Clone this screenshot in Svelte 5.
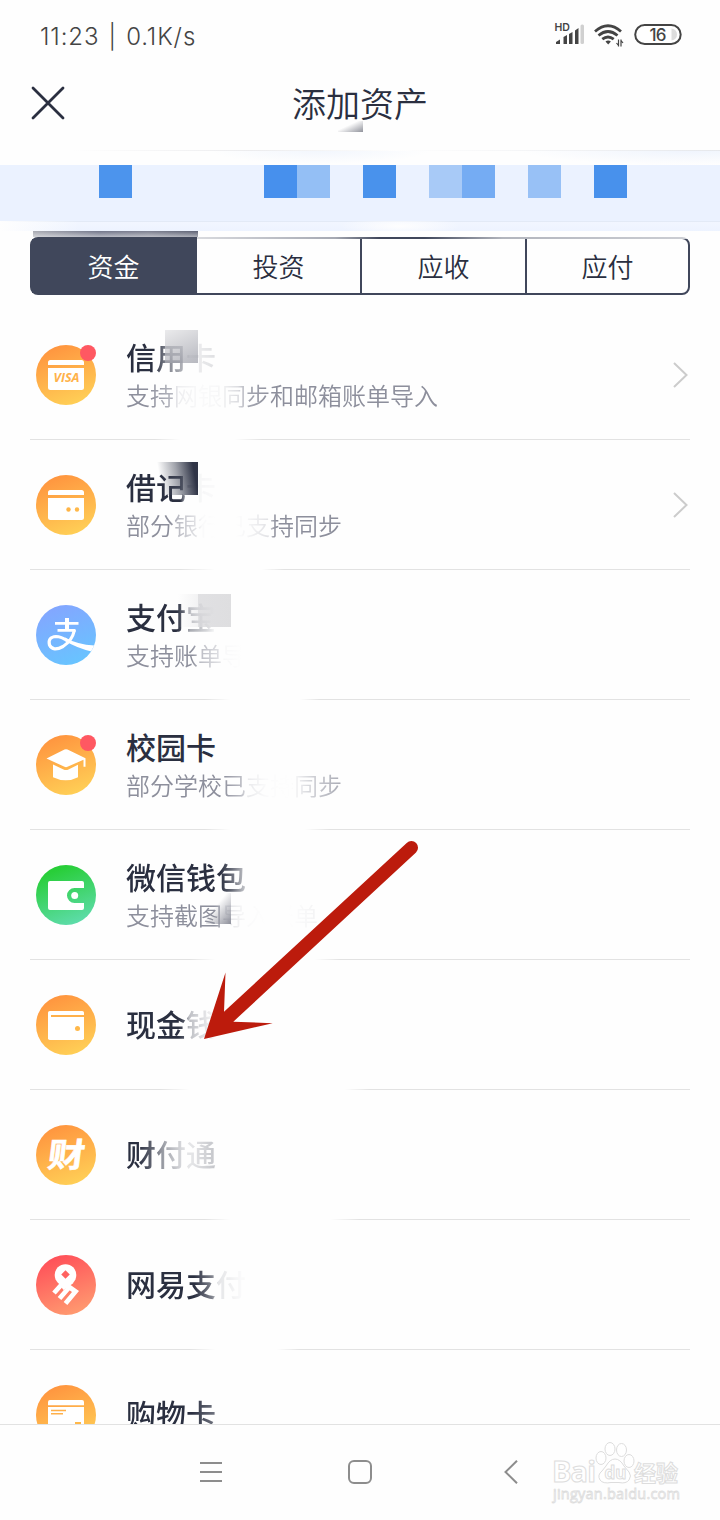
<script lang="ts">
	interface Asset {
		icon: string;
		tone: string;
		title: string;
		sub?: string;
		dot?: boolean;
		arrow?: boolean;
		// alpha/offset pairs for the wiped part of each line
		titleFade?: [number, number][];
		subFade?: [number, number][];
		gap?: [number, number, number, number];
	}

	const tabs = ['资金', '投资', '应收', '应付'];
	let active = $state(0);

	const assets: Asset[] = [
		{
			icon: 'visa',
			tone: 'orange',
			title: '信用卡',
			sub: '支持网银同步和邮箱账单导入',
			dot: true,
			arrow: true,
			titleFade: [[1, 28], [0.6, 40], [0.35, 58], [0.06, 64], [0.15, 90]],
			subFade: [[1, 22], [0.65, 46], [0.15, 52], [0.04, 74], [0.06, 92], [0.3, 112], [0.8, 122], [1, 145]],
			gap: [125, 150, 205, 232]
		},
		{
			icon: 'debit',
			tone: 'orange',
			title: '借记卡',
			sub: '部分银行已支持同步',
			arrow: true,
			titleFade: [[1, 54], [0.4, 60], [0.04, 68], [0.02, 90]],
			subFade: [[1, 44], [0.6, 52], [0.25, 70], [0.04, 76], [0, 90], [0, 110], [0.08, 122], [0.25, 142], [0.9, 148], [1, 150]],
			gap: [150, 185, 232, 254]
		},
		{
			icon: 'alipay',
			tone: 'blue',
			title: '支付宝',
			sub: '支持账单导入',
			titleFade: [[1, 50], [0.8, 58], [0.4, 64], [0.2, 80], [0.05, 88]],
			subFade: [[1, 66], [0.6, 74], [0.25, 94], [0.05, 98], [0, 116]],
			gap: [175, 200, 270, 290]
		},
		{
			icon: 'campus',
			tone: 'orange',
			title: '校园卡',
			sub: '部分学校已支持同步',
			dot: true,
			subFade: [[1, 96], [0.6, 115], [0.18, 122], [0.03, 140], [0, 165], [0.25, 178], [0.5, 192], [0.75, 216]],
			gap: [175, 200, 275, 300]
		},
		{
			icon: 'wechat',
			tone: 'green',
			title: '微信钱包',
			sub: '支持截图导入账单',
			titleFade: [[1, 94], [0.7, 106], [0.3, 118]],
			subFade: [[1, 88], [0.7, 95], [0.25, 100], [0.04, 120], [0, 140], [0, 162], [0.1, 192]],
			gap: [160, 185, 285, 310]
		},
		{
			icon: 'cash',
			tone: 'orange',
			title: '现金钱包',
			titleFade: [[1, 52], [0.8, 59], [0.3, 63], [0.12, 80], [0, 90]],
			gap: [130, 160, 315, 340]
		},
		{
			icon: 'tenpay',
			tone: 'orange',
			title: '财付通',
			titleFade: [[1, 12], [0.7, 28], [0.4, 40], [0.12, 60], [0.12, 66], [0.28, 90]],
			gap: [175, 200, 300, 330]
		},
		{
			icon: 'netease',
			tone: 'red',
			title: '网易支付',
			titleFade: [[1, 68], [0.6, 86], [0.12, 92], [0.02, 115]],
			gap: [160, 185, 247, 270]
		},
		{
			icon: 'shopping',
			tone: 'orange',
			title: '购物卡',
			titleFade: [[1, 66], [0.65, 90]]
		}
	];

	const mosaic = [
		'', '', '', '#4c94ed', '', '', '', '', '#4790ed', '#94bff5', '', '#4992ec',
		'', '#a8caf7', '#75acf3', '', '#98c1f6', '', '#4891ec', '', '', ''
	];

	function fade(stops?: [number, number][]) {
		if (!stops) return 'none';
		return `linear-gradient(90deg, ${stops.map(([a, x]) => `rgba(0,0,0,${a}) ${x}px`).join(', ')})`;
	}

	function gapFade(gap?: [number, number, number, number]) {
		if (!gap) return 'none';
		return fade([[1, gap[0]], [0, gap[1]], [0, gap[2]], [1, gap[3]]]);
	}
</script>

<div class="screen">
	<div class="status">
		<span class="clock">11:23 | 0.1K/s</span>
		<svg class="status-icons" width="130" height="28" viewBox="0 0 130 28">
			<text x="1.5" y="11" class="hd">HD</text>
			<g fill="#444">
				<path d="M3 24v-2l4-2.500v4.500zM10.500 24v-7l3.500-2v9zM16 24v-10l3.500-2v12zM22 24V10.500L25.500 8v16z" />
			</g>
			<rect x="27.500" y="4.500" width="3.500" height="19.500" rx="1.500" fill="#d0d0d0" />
			<g fill="none" stroke="#444" stroke-width="2.800">
				<path d="M42 11.500q13-11.500 26 0" />
				<path d="M45.500 15.500q9.500-8 19 0" />
				<path d="M49.300 19.200q5.700-4.500 11.400 0" />
			</g>
			<path d="M55.200 24.500l-2.700-3q2.700-2 5.400 0z" fill="#444" />
			<path d="M65.500 19.500v7M68 26.500v-7M63.500 23l2 2.500M70 23l-2-2.500" stroke="#444" stroke-width="1.200" fill="none" />
			<rect x="82.200" y="5" width="45.500" height="19" rx="9.500" fill="#fff" stroke="#444" stroke-width="2" />
			<path d="M118.500 8.500q5.500 1 5.500 6t-5.500 6z" fill="#ddd" />
			<text x="96.500" y="20.500" class="level">16</text>
		</svg>
	</div>

	<header>
		<svg class="close" width="36" height="36" viewBox="0 0 36 36">
			<path d="M3 3l30 30M33 3L3 33" stroke="#2a2f40" stroke-width="2.800" stroke-linecap="round" />
		</svg>
		<h1>添加资产</h1>
		<i class="title-smudge"></i>
	</header>

	<div class="banner">
		<div class="haze"></div>
		<div class="mosaic">
			{#each mosaic as color}
				<i style:background={color}></i>
			{/each}
		</div>
	</div>

	<div class="tabs" role="tablist">
		{#each tabs as tab, i}
			<button class="tab" class:active={active === i} role="tab" aria-selected={active === i} onclick={() => (active = i)}>
				{tab}
			</button>
		{/each}
		<i class="tabs-smudge"></i>
	</div>

	<main>
		{#each assets as asset}
			<div class="row">
				<div class="icon {asset.tone}">
					<svg width="60" height="60" viewBox="0 0 60 60">
						{#if asset.icon === 'visa'}
							<path d="M12 20v-2.500q0-2.500 2.500-2.500h31q2.500 0 2.500 2.500V20zM12 23h36v19.500q0 2.500-2.500 2.500h-31q-2.500 0-2.500-2.500z" fill="#fff" />
							<text x="30.500" y="37" class="visa" textLength="26" lengthAdjust="spacingAndGlyphs">VISA</text>
						{:else if asset.icon === 'debit'}
							<path d="M12 20v-2.500q0-2.500 2.500-2.500h31q2.500 0 2.500 2.500V20zM12 23h36v19.500q0 2.500-2.500 2.500h-31q-2.500 0-2.500-2.500z" fill="#fff" />
							<circle cx="32.500" cy="34.500" r="2.200" fill="#ffb445" />
							<circle cx="41" cy="34.500" r="2.200" fill="#ffb84a" />
						{:else if asset.icon === 'alipay'}
							<g fill="none" stroke="#fff">
								<path d="M19 18.300h23.500M21.500 25.300h18" stroke-width="2.800" />
								<path d="M31 13v12" stroke-width="4" />
								<path d="M38.500 25Q36 36 27 41.500Q17 47 13.500 40Q11.500 32 20 31.500Q25 31.500 32 36" stroke-width="3.200" />
							</g>
							<path d="M29 32.500Q41 39.500 58.500 40.500L55.500 46.500Q41 43 29 36z" fill="#fff" />
						{:else if asset.icon === 'campus'}
							<g fill="#fff">
								<path d="M10.500 23.500L28.500 14.500q1.500-.700 3 0L49.500 23.200v8.500h-2v-7L31.500 31.800q-1.500.700-3 0z" />
								<path d="M17 29.500l10.500 5q2.500 1.200 5 0l9.500-4.800v12.500Q30 48.500 17 42.200z" />
							</g>
						{:else if asset.icon === 'wechat'}
							<path d="M14 16h32q2 0 2 2v5H38.500a7.500 7.500 0 0 0 0 15H48v5q0 2-2 2H14q-2 0-2-2V18q0-2 2-2z" fill="#fff" />
							<circle cx="38.700" cy="30.600" r="3.500" fill="#fff" />
						{:else if asset.icon === 'cash'}
							<rect x="12" y="16" width="36" height="29" rx="1.800" fill="#fff" />
							<path d="M15 21h33" stroke="#ffb04a" stroke-width="2" />
							<circle cx="41.500" cy="33.500" r="2.500" fill="#ffb84a" />
						{:else if asset.icon === 'tenpay'}
							<text x="0" y="0" class="cai" transform="translate(10.500 41.500) skewX(-7) scale(1.06 .95)">财</text>
						{:else if asset.icon === 'netease'}
							<circle cx="29.500" cy="20" r="10.800" fill="#fff" />
							<rect x="26.500" y="16.500" width="6" height="6" fill="#ff6260" transform="rotate(45 29.500 19.500)" />
							<path d="M24 25.500L39.500 36.500L29.500 48.500M27 28L18 38M33.500 32L23.500 43.500" fill="none" stroke="#fff" stroke-width="4.800" />
							<path d="M36 26L26 33" stroke="#fff" stroke-width="5" />
						{:else if asset.icon === 'shopping'}
							<path d="M12 20.300v-3.300q0-2 2-2h32q2 0 2 2v3.300zM12 22h36v21q0 2-2 2H14q-2 0-2-2z" fill="#fff" />
							<path d="M15 25.500h15M15 28.800h12" stroke="#ffb04a" stroke-width="1.400" />
							<rect x="39" y="37" width="6" height="4" fill="#ffb84a" />
						{/if}
					</svg>
					{#if asset.dot}
						<b class="dot"></b>
					{/if}
				</div>
				<div class="text" class:single={!asset.sub}>
					<div class="title" style:mask-image={fade(asset.titleFade)}>{asset.title}</div>
					{#if asset.sub}
						<div class="sub" style:mask-image={fade(asset.subFade)}>{asset.sub}</div>
					{/if}
				</div>
				{#if asset.arrow}
					<svg class="chevron" width="17" height="28" viewBox="0 0 17 28">
						<path d="M2 2l12.500 12L2 26" fill="none" stroke="#ccc" stroke-width="2" />
					</svg>
				{/if}
				<i class="smudge {asset.icon}"></i>
				<div class="line" style:mask-image={gapFade(asset.gap)}></div>
			</div>
		{/each}
	</main>

	<nav>
		<svg width="22" height="22" viewBox="0 0 22 22">
			<path d="M0 2h22M0 11h22M0 20h22" stroke="#8d8d8d" stroke-width="2" />
		</svg>
		<svg width="24" height="24" viewBox="0 0 24 24">
			<rect x="1" y="1" width="22" height="22" rx="5" fill="none" stroke="#8d8d8d" stroke-width="2" />
		</svg>
		<svg width="14" height="24" viewBox="0 0 14 24">
			<path d="M13 .700L1.500 12L13 23.300" fill="none" stroke="#8d8d8d" stroke-width="2" />
		</svg>
	</nav>

	<svg class="arrow" width="220" height="208" viewBox="0 0 220 208">
		<path d="M0 202L21.500 135.500L20 174.700L202.700 5.900A6.600 6.600 0 0 1 212 15.500L29.300 184.700L68.700 186.300z" fill="#bc1b0c" />
	</svg>

	<svg class="watermark" width="140" height="70" viewBox="0 0 140 70">
		<g fill="#fff" stroke="#ddd" stroke-width="1">
			<text x="2" y="42" class="wm-bai" textLength="44">Bai</text>
			<ellipse cx="51" cy="18" rx="5" ry="6.500" />
			<ellipse cx="60" cy="9" rx="5" ry="6.500" />
			<ellipse cx="71.500" cy="10" rx="5" ry="6.500" />
			<ellipse cx="79" cy="21" rx="5" ry="6.500" />
			<path d="M65 19q5 0 9 7l5 6q3 4 0 8q-3 4-10 2.500h-8q-8 1.500-11-2.500q-3-5 2-9l4-5q4-7 9-7z" />
			<text x="54.500" y="39" class="wm-du">du</text>
			<text x="84" y="41" class="wm-jy">经验</text>
			<text x="3" y="59" class="wm-url" textLength="127">jingyan.baidu.com</text>
		</g>
	</svg>
</div>

<style>
	:global(body) {
		background: #fefefe;
	}

	.screen {
		position: relative;
		display: flex;
		flex-direction: column;
		width: 720px;
		height: 1520px;
		overflow: hidden;
		background: #fefefe;
		color: #2a2f40;
		font-family: 'Noto Sans CJK SC', sans-serif;
	}

	i {
		display: block;
	}

	.status {
		display: flex;
		justify-content: space-between;
		align-items: center;
		height: 72px;
		padding: 0 37px 0 40px;
		box-sizing: border-box;
	}

	.clock {
		font: 24px Inter, sans-serif;
		font-weight: 350;
		letter-spacing: 0.9px;
		word-spacing: 1.5px;
		color: #444;
	}

	.status-icons {
		margin-top: -4px;
	}

	.hd {
		font: 600 10.5px Inter, sans-serif;
		fill: #444;
	}

	.level {
		font: 500 17px Inter, sans-serif;
		letter-spacing: -0.8px;
		fill: #444;
	}

	header {
		position: relative;
		display: flex;
		align-items: center;
		height: 78px;
		padding: 0 30px;
	}

	.close {
		margin-top: -16px;
	}

	h1 {
		flex: 1;
		margin: -17px 36px 0 0;
		text-align: center;
		font-size: 34px;
		font-weight: 350;
		line-height: 48px;
	}

	.title-smudge {
		position: absolute;
		left: 338px;
		top: 49px;
		width: 25px;
		height: 11px;
		background: linear-gradient(335deg, #90929b, #fefefe 60%);
	}

	.banner {
		height: 81px;
		background:
			linear-gradient(90deg, #fefefe, #fefefe00 80px) 0 71px / 100% 10px no-repeat,
			radial-gradient(ellipse 60px 10px at 400px 5px, #fefefe, #fefefe00) 0 71px / 100% 10px no-repeat,
			linear-gradient(#ebf2ff 71px, #e3eaf6 71px, #e3eaf6 72px, #f2f6ff 72px, #edf3ff);
	}

	.haze {
		height: 15px;
		background:
			linear-gradient(90deg, #fefefe 10%, #ececee 35%, #fefefe 55%, #e6e8ec) 0 0 / 100% 1px no-repeat,
			radial-gradient(ellipse 110px 14px at 320px 0, #f2f6fd, #fefefe00),
			radial-gradient(ellipse 170px 15px at 690px 0, #eff4fd, #fefefe00),
			#fefefe;
	}

	.mosaic {
		display: flex;
	}

	.mosaic i {
		flex: none;
		width: 33px;
		height: 33px;
	}

	.tabs {
		position: relative;
		display: flex;
		box-sizing: border-box;
		flex: none;
		height: 58px;
		margin: 6px 30px 15px;
		border: 2px solid #40475b;
		border-radius: 8px;
	}

	.tab {
		flex: 0 0 165px;
		box-sizing: border-box;
		padding: 0 0 2px;
		border: none;
		border-right: 2px solid #40475b;
		background: none;
		color: #2a2f40;
		font-family: inherit;
		font-size: 26px;
		font-weight: 350;
	}

	.tab:nth-of-type(4) {
		flex: 1;
		border-right: none;
	}

	.tab.active {
		background: #40475b;
		color: #fff;
	}

	.tabs-smudge {
		position: absolute;
		left: 1px;
		top: -8px;
		width: 165px;
		height: 6px;
		background:
			linear-gradient(#fff0, #ffffff80),
			linear-gradient(90deg, #a9abb3, #72768a 40%, #7d8090 70%, #5d6274);
	}

	.tabs::after {
		content: '';
		position: absolute;
		left: 165px;
		right: -2px;
		top: -2px;
		height: 2px;
		border-radius: 0 8px 0 0;
		background: linear-gradient(90deg, #fffc, #fff8 28%, #fff0 37%, #fff0 46%, #fff9 62%, #fffb);
	}

	main {
		flex: 1;
		min-height: 0;
		overflow: hidden;
		padding: 0 30px;
	}

	.row {
		position: relative;
		display: flex;
		align-items: center;
		height: 130px;
	}

	.icon {
		position: relative;
		width: 60px;
		height: 60px;
		margin: 0 30px 0 6px;
		border-radius: 50%;
	}

	.icon svg {
		display: block;
		border-radius: 50%;
	}

	.orange {
		background: linear-gradient(160deg, #ff953f 10%, #ffcf56 90%);
	}

	.blue {
		background: linear-gradient(160deg, #83a6ff 10%, #68c4ff 90%);
	}

	.green {
		background: linear-gradient(160deg, #28ce38 15%, #5edcab 90%);
	}

	.red {
		background: linear-gradient(160deg, #ff5059 10%, #ff9a70 90%);
	}

	.dot {
		position: absolute;
		right: 0;
		top: 0;
		width: 16px;
		height: 16px;
		border-radius: 50%;
		background: #ff5862;
	}

	text.visa {
		font: italic 700 11.5px 'Open Sans', sans-serif;
		text-anchor: middle;
		fill: #ffb24a;
	}

	.cai {
		font-size: 35px;
		font-weight: 700;
		fill: #fff;
		stroke: #fff;
		stroke-width: 0.6px;
	}

	.text {
		flex: 1;
		padding-bottom: 1px;
	}

	.single {
		padding-bottom: 4px;
	}

	.title {
		font-size: 30px;
		font-weight: 500;
		line-height: 40px;
	}

	.sub {
		margin-top: 1px;
		font-size: 24px;
		font-weight: 350;
		line-height: 36px;
		color: #8d8f9c;
	}

	.chevron {
		margin-right: 1px;
	}

	.line {
		position: absolute;
		left: 0;
		right: 0;
		bottom: 0;
		height: 1px;
		background: #e2e2e2;
	}

	.smudge {
		position: absolute;
	}

	.smudge.visa {
		left: 135px;
		top: 20px;
		width: 33px;
		height: 33px;
		background: linear-gradient(155deg, #e4e4e6, #888a96cc);
		opacity: 0.75;
	}

	.smudge.debit {
		left: 127px;
		top: 22px;
		width: 41px;
		height: 33px;
		background: linear-gradient(80deg, #fff0 12%, #50556488 50%, #2f3446 88%);
	}

	.smudge.alipay {
		left: 148px;
		top: 24px;
		width: 53px;
		height: 33px;
		background: linear-gradient(90deg, #fff0, #e8e8ea88 20px, #d9d9dccc 20px, #dedee0);
	}

	.smudge.wechat {
		left: 176px;
		top: 63px;
		width: 25px;
		height: 31px;
		background: linear-gradient(130deg, #fff0 40%, #8e909b);
	}

	nav {
		display: flex;
		align-items: center;
		flex: none;
		height: 96px;
		box-sizing: border-box;
		padding: 0 0 2px 200px;
		border-top: 1px solid #e2e2e2;
	}

	nav svg:nth-child(2) {
		margin: 0 132px 0 126px;
	}

	.arrow {
		position: absolute;
		left: 204px;
		top: 837px;
	}

	.watermark {
		position: absolute;
		left: 550px;
		top: 1440px;
	}

	.wm-bai {
		font: 700 29px 'Open Sans', sans-serif;
	}

	.wm-du {
		font: 700 17px 'Open Sans', sans-serif;
	}

	.wm-jy {
		font-size: 22px;
		font-weight: 700;
	}

	.wm-url {
		font: 14.5px 'Open Sans', sans-serif;
		stroke-width: 0.8px;
	}
</style>
